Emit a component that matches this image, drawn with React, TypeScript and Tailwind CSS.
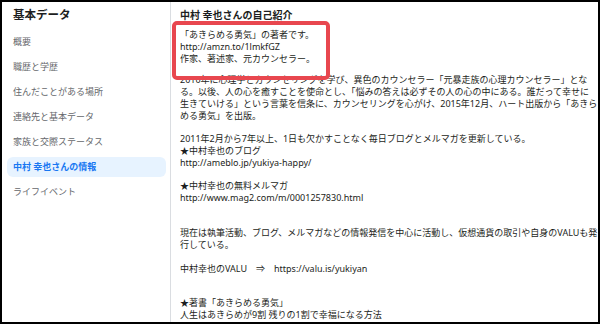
import React from 'react';

const menuItems = [
  '概要',
  '職歴と学歴',
  '住んだことがある場所',
  '連絡先と基本データ',
  '家族と交際ステータス',
  '中村 幸也さんの情報',
  'ライフイベント',
];

const font = { fontFamily: '"Noto Sans", "Noto Sans CJK JP", sans-serif' };

const Lines: React.FC<{ lines: string[]; className?: string }> = ({ lines, className = '' }) => (
  <div className={className}>
    {lines.map((line, i) => (
      <div key={i} className="h-[12px] leading-[12px] whitespace-nowrap">
        {line}
      </div>
    ))}
  </div>
);

export default function App() {
  return (
    <div
      className="relative w-[600px] h-[324px] border-2 border-black bg-white flex overflow-hidden"
      style={font}
    >
      {/* Sidebar */}
      <div className="w-[169px] shrink-0 border-r border-[#dadde1] pt-[5px]">
        <div className="pl-[11px] h-4 leading-4 text-[11.5px] font-bold text-[#1c1e21]">基本データ</div>
        <div className="mt-[9px] pl-[5px] pr-[4px] flex flex-col gap-[5px]">
          {menuItems.map((item) => {
            const active = item === '中村 幸也さんの情報';
            return (
              <div
                key={item}
                className={`h-5 flex items-center pl-[6px] rounded-md text-[9px] ${
                  active ? 'bg-[#e7f3ff] text-[#1877f2] font-bold' : 'text-[#65676b]'
                }`}
              >
                {item}
              </div>
            );
          })}
        </div>
      </div>

      {/* Content */}
      <div className="flex-1 pl-[9px] pt-[6px] text-[9px] text-[#1c1e21]">
        <div className="h-[14px] leading-[14px] text-[10px] font-bold">中村 幸也さんの自己紹介</div>
        <Lines
          className="mt-[7px]"
          lines={['「あきらめる勇気」の著者です。', 'http://amzn.to/1lmkfGZ', '作家、著述家、元カウンセラー。']}
        />
        <Lines
          className="mt-[9px]"
          lines={[
            '2010年に心理学とカウンセリングを学び、異色のカウンセラー「元暴走族の心理カウンセラー」とな',
            'る。以後、人の心を癒すことを使命とし、「悩みの答えは必ずその人の心の中にある。誰だって幸せに',
            '生きていける」という言葉を信条に、カウンセリングを心がけ、2015年12月、ハート出版から「あきら',
            'める勇気」を出版。',
          ]}
        />
        <Lines
          className="mt-[11px]"
          lines={[
            '2011年2月から7年以上、1日も欠かすことなく毎日ブログとメルマガを更新している。',
            '★中村幸也のブログ',
            'http://ameblo.jp/yukiya-happy/',
          ]}
        />
        <Lines
          className="mt-[11px]"
          lines={['★中村幸也の無料メルマガ', 'http://www.mag2.com/m/0001257830.html']}
        />
        <Lines
          className="mt-[23px]"
          lines={[
            '現在は執筆活動、ブログ、メルマガなどの情報発信を中心に活動し、仮想通貨の取引や自身のVALUも発',
            '行している。',
          ]}
        />
        <Lines className="mt-[12px]" lines={['中村幸也のVALU　⇒　https://valu.is/yukiyan']} />
        <Lines
          className="mt-[22px]"
          lines={['★著書「あきらめる勇気」', '人生はあきらめが9割 残りの1割で幸福になる方法']}
        />
      </div>

      {/* Annotation box */}
      <div className="absolute left-[170px] top-[19px] w-[158px] h-[59px] border-4 border-[#e8474f] rounded-[5px] pointer-events-none" />
    </div>
  );
}
